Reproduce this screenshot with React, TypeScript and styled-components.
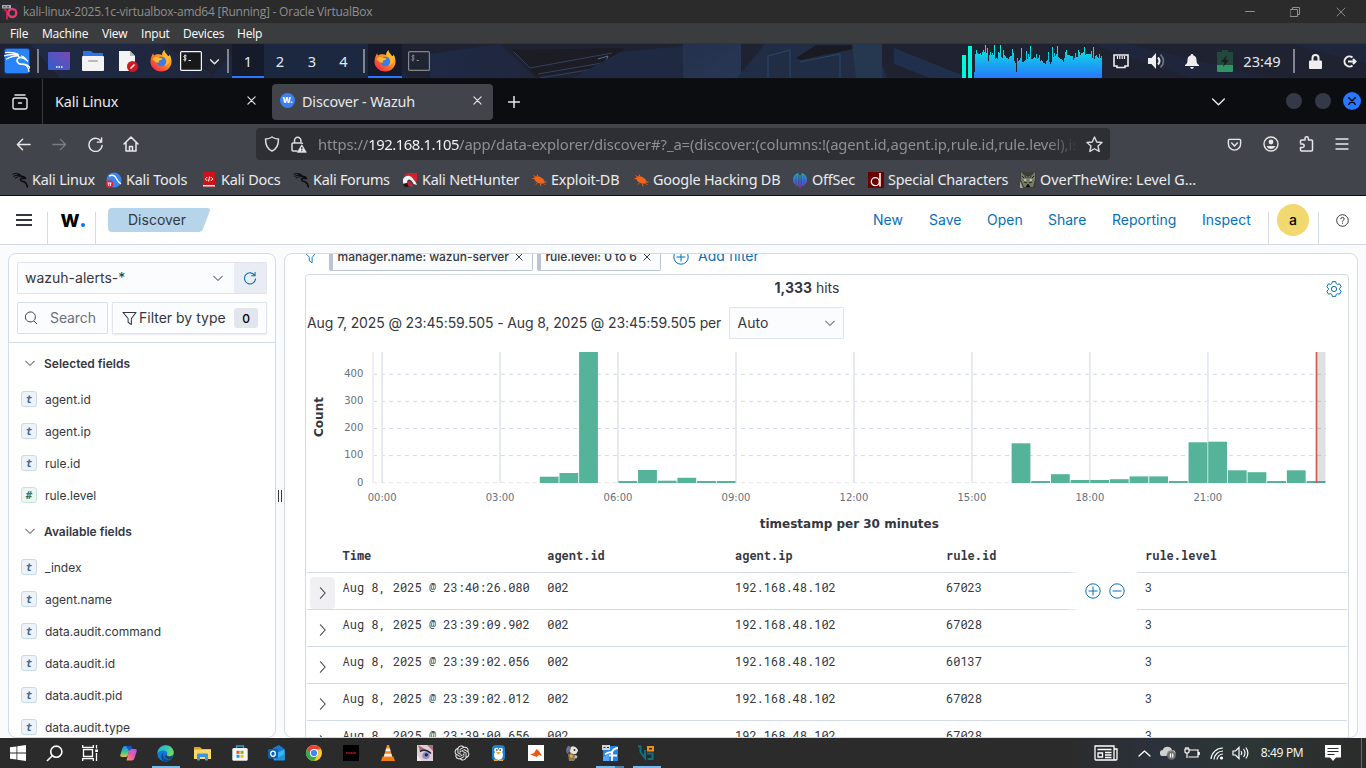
import React from "react";
import styled, { createGlobalStyle, css } from "styled-components";
import { SiKalilinux } from "react-icons/si";
import { RiOpenaiFill } from "react-icons/ri";

const Global = createGlobalStyle`
  *, *::before, *::after { box-sizing: border-box; }
  html, body { margin: 0; padding: 0; }
  body { width: 1366px; height: 768px; overflow: hidden; background: #2b2b2b; }
  svg { display: block; flex: none; }
`;

const shell = `"Open Sans", "Noto Sans", sans-serif`;
const kali = `"Noto Sans", "Open Sans", sans-serif`;
const inter = `Inter, "Noto Sans", sans-serif`;
const mono = `"Roboto Mono", "DejaVu Sans Mono", monospace`;

const Screen = styled.div`
  width: 1366px;
  height: 768px;
  display: flex;
  flex-direction: column;
  overflow: hidden;
`;

const Cell = styled.div<{ $w: number; $ml?: number }>`
  width: ${(p) => p.$w}px;
  margin-left: ${(p) => p.$ml ?? 0}px;
  flex: none;
  display: flex;
  align-items: center;
  justify-content: center;
`;

const Push = styled.div`
  flex: 1;
`;

/* ---------- VirtualBox window frame ---------- */

const TitleBar = styled.header`
  height: 23px;
  flex: none;
  display: flex;
  align-items: center;
  padding-left: 2px;
  background: #2b2b2b;
  font: 400 12px/16px ${shell};
  color: #8f8f8f;
`;
const TitleText = styled.span`
  margin-left: 5px;
  letter-spacing: -0.23px;
  white-space: nowrap;
`;
const MenuBar = styled.nav`
  height: 21px;
  flex: none;
  display: flex;
  align-items: center;
  padding: 1px 0 0 10px;
  background: #3b3c3d;
  border-bottom: 1px solid #333436;
  font: 400 12px/20px ${shell};
  color: #ffffff;
`;
const MenuItem = styled.span<{ $w: number }>`
  width: ${(p) => p.$w}px;
  letter-spacing: -0.2px;
  white-space: nowrap;
`;

/* ---------- Kali panel ---------- */

const Panel = styled.div`
  height: 35px;
  flex: none;
  display: flex;
  align-items: stretch;
  position: relative;
  background: #1d2130;
  border-bottom: 1px solid #0f1116;
  font: 400 14.6px/34px ${kali};
  color: #e6e8ee;
`;
const Wallpaper = styled.svg`
  position: absolute;
  left: 0;
  top: 0;
`;
const PanelRow = styled.div`
  position: relative;
  display: flex;
  flex: 1;
  align-items: stretch;
`;
const Sep = styled.div<{ $ml: number }>`
  width: 2px;
  height: 24px;
  flex: none;
  align-self: center;
  margin-left: ${(p) => p.$ml}px;
  background: #82858d;
`;
const Workspace = styled(Cell)<{ $active?: boolean }>`
  ${(p) =>
    p.$active &&
    css`
      background: #151b2b;
      box-shadow: inset 0 -2px 0 #2777ff;
    `}
`;
const Clock = styled(Cell)`
  font-size: 14.6px;
`;

/* ---------- Firefox ---------- */

const TabBar = styled.div`
  height: 45px;
  flex: none;
  display: flex;
  align-items: center;
  background: #0c0d11;
  font: 400 14.4px/20px ${kali};
  letter-spacing: -0.16px;
  color: #e8e8ea;
`;
const BarDivider = styled.div`
  width: 1px;
  height: 45px;
  background: #3a3b40;
`;
const Tab = styled.div<{ $active?: boolean; $w: number }>`
  width: ${(p) => p.$w}px;
  height: 36px;
  display: flex;
  align-items: center;
  border-radius: 4px;
  padding: 0 ${(p) => (p.$active ? 11 : 11)}px 2px ${(p) => (p.$active ? 8 : 12)}px;
  background: ${(p) => (p.$active ? "#42444c" : "transparent")};
`;
const TabTitle = styled.span`
  flex: 1;
  padding-top: 2px;
  white-space: nowrap;
`;
const Favicon = styled.span`
  width: 15px;
  height: 15px;
  margin-right: 7px;
  border-radius: 50%;
  background: #3b82f0;
  color: #fff;
  font: 800 8px/14px ${inter};
  text-align: center;
`;
const WinButton = styled.span<{ $close?: boolean }>`
  width: ${(p) => (p.$close ? 18 : 16)}px;
  height: ${(p) => (p.$close ? 18 : 16)}px;
  margin-bottom: 1px;
  border-radius: 50%;
  background: ${(p) => (p.$close ? "#2777ff" : "#343947")};
  display: flex;
  align-items: center;
  justify-content: center;
`;
const NavBar = styled.div`
  height: 40px;
  flex: none;
  display: flex;
  align-items: center;
  background: #42444c;
  color: #e8e8ea;
`;
const UrlBar = styled.div`
  width: 854px;
  height: 32px;
  margin-left: 108px;
  flex: none;
  display: flex;
  align-items: center;
  border-radius: 4px;
  background: #2e2f34;
  font: 400 14.8px/22px ${kali};
  color: #8e8f93;
`;
const Url = styled.span`
  width: 760px;
  margin-left: 8px;
  overflow: hidden;
  white-space: nowrap;
  letter-spacing: -0.09px;
  mask-image: linear-gradient(90deg, #000 96%, transparent 100%);
`;
const Host = styled.b`
  font-weight: 400;
  letter-spacing: -0.45px;
  color: #f2f2f3;
`;
const Bookmarks = styled.div`
  height: 32px;
  flex: none;
  display: flex;
  align-items: center;
  background: #42444c;
  border-bottom: 1px solid #0c0d11;
  padding-left: 12px;
  font: 400 14.4px/20px ${kali};
  letter-spacing: -0.2px;
  color: #ececee;
`;
const Bookmark = styled.a<{ $w: number; $ls?: number }>`
  width: ${(p) => p.$w}px;
  flex: none;
  display: flex;
  align-items: center;
  gap: 4px;
  white-space: nowrap;
  ${(p) => p.$ls !== undefined && `letter-spacing: ${p.$ls}px;`}
`;

/* ---------- Wazuh ---------- */

const blue = "#0870b7";

const WzHeader = styled.header`
  height: 49px;
  flex: none;
  display: flex;
  align-items: flex-start;
  background: #fff;
  border-bottom: 1px solid #d3dae6;
  font: 400 14px/48px ${inter};
  color: ${blue};
`;
const WzDivider = styled.div`
  width: 1px;
  height: 32px;
  margin-top: 16px;
  background: #d3dae6;
`;
const HeaderCell = styled(Cell)`
  height: 48px;
`;
const Logo = styled.span`
  display: flex;
  align-items: baseline;
  padding: 1px 0 0 2px;
  color: #000;
  font: 800 18px/24px ${inter};
`;
const LogoDot = styled.i`
  width: 4px;
  height: 4px;
  margin-left: 1px;
  border-radius: 50%;
  background: #0078ff;
`;
const Crumb = styled.div`
  width: 102px;
  height: 24px;
  margin: 12px 0 0 12px;
  padding-left: 20px;
  position: relative;
  font: 400 14px/24px ${inter};
  color: #343741;
`;
const CrumbShape = styled.svg`
  position: absolute;
  left: 0;
  top: 0;
`;
const CrumbText = styled.span`
  position: relative;
`;
const WzLink = styled.a<{ $w: number }>`
  width: ${(p) => p.$w}px;
  flex: none;
  white-space: nowrap;
`;
const Avatar = styled.span`
  width: 32px;
  height: 32px;
  margin-right: 1px;
  border-radius: 50%;
  background: #f1d86f;
  color: #000;
  font: 500 14px/32px ${inter};
  text-align: center;
`;
const WzBody = styled.main`
  height: 493px;
  flex: none;
  display: flex;
  padding: 8px 8px 0;
  background: #fafbfd;
  font-family: ${inter};
  color: #343741;
`;
const Side = styled.aside`
  width: 268px;
  height: 485px;
  flex: none;
  overflow: hidden;
  background: #fff;
  border: 1px solid #d3dae6;
  border-radius: 8px;
`;
const Resizer = styled.div`
  width: 8px;
  flex: none;
  display: flex;
  align-items: center;
  justify-content: center;
  gap: 2px;
`;
const ResizerBar = styled.i`
  width: 1px;
  height: 12px;
  background: #343741;
`;
const SideTop = styled.div`
  height: 89px;
  padding: 8px;
  border-bottom: 1px solid #d3dae6;
`;
/* label nudged up so that it sits on the optical centre of its control */
const Raised = styled.span`
  padding-bottom: 2px;
  white-space: nowrap;
`;
/* label nudged down to line up with the mark beside it */
const Lowered = styled.span`
  padding-top: 2px;
`;
const PatternBox = styled.div`
  height: 32px;
  display: flex;
  align-items: center;
  border: 1px solid #e0e4ef;
  border-radius: 1px;
  background: #fbfcfd;
  font-size: 14px;
`;
const PatternName = styled(Raised)`
  flex: 1;
  padding-left: 7px;
`;
const RefreshBox = styled.span`
  width: 32px;
  height: 30px;
  margin-left: 11px;
  display: flex;
  align-items: center;
  justify-content: center;
  background: #e9edf3;
`;
const FilterRow = styled.div`
  display: flex;
  gap: 4px;
  margin-top: 8px;
`;
const SearchBox = styled.div`
  width: 91px;
  height: 32px;
  display: flex;
  align-items: center;
  padding-left: 6px;
  gap: 12px;
  border: 1px solid #d8deea;
  border-radius: 1px;
  background: #fbfcfd;
  font-size: 14px;
  letter-spacing: -0.1px;
  color: #69707d;
`;
const TypeButton = styled.div`
  width: 155px;
  height: 32px;
  display: flex;
  align-items: center;
  padding-left: 9px;
  border: 1px solid #e0e4ef;
  border-radius: 1px;
  background: #fbfcfd;
  box-shadow: 0 1px 2px rgba(100, 110, 140, 0.15);
  font-size: 14px;
`;
const TypeLabel = styled(Raised)`
  width: 95px;
  margin-left: 2px;
`;
const CountBadge = styled.span`
  width: 24px;
  height: 20px;
  border-radius: 3px;
  background: #e0e5ee;
  color: #000;
  font: 500 12px/21px ${inter};
  text-align: center;
`;
const GroupHead = styled.div`
  height: 40px;
  display: flex;
  align-items: center;
  padding-left: 16px;
  gap: 9px;
  font: 600 12px/16px ${inter};
`;
const Field = styled.div`
  height: 32px;
  display: flex;
  align-items: center;
  padding-left: 12px;
  gap: 8px;
  font-size: 12px;
  line-height: 16px;
`;
const TypeMark = styled.span<{ $num?: boolean }>`
  width: 16px;
  height: 16px;
  border-radius: 3px;
  border: 1px solid ${(p) => (p.$num ? "#c6e5dc" : "#c8d9e9")};
  background: ${(p) => (p.$num ? "#ecf7f3" : "#edf3f8")};
  color: ${(p) => (p.$num ? "#387765" : "#41688e")};
  font: italic 700 10.5px/14px "DejaVu Sans Mono", monospace;
  text-align: center;
`;

const Content = styled.section`
  width: 1074px;
  height: 485px;
  flex: none;
  overflow: hidden;
  background: #fff;
  border: 1px solid #d3dae6;
  border-radius: 8px;
  padding: 0 8px 0 20px;
  display: flow-root;
`;
const FilterBar = styled.div`
  height: 28px;
  margin-top: -11px;
  display: flex;
  align-items: center;
  color: ${blue};
  font-size: 14px;
`;
const Pill = styled.span<{ $w: number; $ml: number }>`
  width: ${(p) => p.$w}px;
  height: 28px;
  margin-left: ${(p) => p.$ml}px;
  flex: none;
  display: flex;
  align-items: center;
  justify-content: space-between;
  padding: 0 9px 0 4.5px;
  border: 1px solid #bcc3d1;
  border-left-width: 4px;
  border-radius: 2px;
  background: #fbfcfd;
  color: #343741;
  font: 500 12px/26px ${inter};
  letter-spacing: -0.03px;
  white-space: nowrap;
`;
const AddFilter = styled(Raised)`
  margin-left: 9px;
  padding-bottom: 3px;
`;
const Results = styled.div`
  width: 1044px;
  height: 480px;
  margin-top: 3px;
  border: 1px solid #d3dae6;
  border-radius: 4px;
`;
const HitsRow = styled.div`
  height: 27px;
  display: flex;
  align-items: center;
  padding: 0 6px 0 468.5px;
  justify-content: space-between;
  font-size: 14px;
`;
const HitsText = styled.span`
  padding-bottom: 3px;
`;
const RangeRow = styled.div`
  height: 32px;
  margin-top: 5px;
  display: flex;
  align-items: center;
  padding-left: 1px;
  font-size: 14px;
`;
const RangeText = styled(Raised)`
  width: 422px;
  letter-spacing: -0.13px;
`;
const Select = styled.span`
  width: 115px;
  height: 32px;
  display: flex;
  align-items: center;
  justify-content: space-between;
  padding: 0 8px 0 7.5px;
  border: 1px solid #e0e4ef;
  border-radius: 1px;
  background: #fbfcfd;
`;
const TableRow = styled.div<{ $head?: boolean }>`
  height: ${(p) => (p.$head ? 33 : 37)}px;
  margin: 0 1px;
  display: grid;
  grid-template-columns: 35.5px 204.700px 187.800px 211px 199px 1fr;
  position: relative;
  padding-top: ${(p) => (p.$head ? 6 : 5)}px;
  border-bottom: 1px solid #d3dae6;
  font: ${(p) => (p.$head ? 700 : 400)} 12px/18px ${mono};
`;
const Toggle = styled.span<{ $hover?: boolean }>`
  width: 25px;
  height: 32px;
  margin: -1px 0 0 3px;
  display: flex;
  align-items: center;
  justify-content: center;
  border-radius: 4px;
  background: ${(p) => (p.$hover ? "#f0f0f2" : "transparent")};
`;
const CellActions = styled.span`
  position: absolute;
  left: 760px;
  top: -2px;
  width: 70px;
  height: 40px;
  display: flex;
  align-items: center;
  gap: 8px;
  padding: 0 0 1px 17.5px;
  background: linear-gradient(90deg, rgba(255, 255, 255, 0), #fff 12px);
`;

/* ---------- Windows taskbar ---------- */

const Taskbar = styled.footer`
  height: 30px;
  flex: none;
  display: flex;
  align-items: stretch;
  background: linear-gradient(90deg, #2b2b2b 0 78%, #2b313b 84%, #2c3634 92%, #2b2b2b);
  font: 400 12px/30px ${shell};
  color: #fff;
`;
const Task = styled(Cell)<{ $open?: boolean; $stack?: boolean }>`
  position: relative;
  ${(p) =>
    p.$open &&
    css`
      &::after {
        content: "";
        position: absolute;
        left: 5px;
        bottom: 0;
        width: 28px;
        height: 2px;
        background: ${p.$stack
          ? "linear-gradient(90deg, #76b9ed 0 19px, #4f7fa6 19px)"
          : "#76b9ed"};
      }
    `}
`;
const DeskEdge = styled.i`
  width: 1px;
  margin: 0 4px 0 13px;
  background: #6a6d6d;
`;
const TaskClock = styled(Cell)`
  letter-spacing: -0.35px;
  white-space: nowrap;
`;

/* ---------- icons ---------- */

type LineProps = { d: string; s?: number; w?: number; c?: string; vb?: string };
const Line = ({ d, s = 16, w = 1.2, c = "currentColor", vb = "0 0 16 16" }: LineProps) => (
  <svg width={s} height={s} viewBox={vb} fill="none" stroke={c} strokeWidth={w} strokeLinecap="round" strokeLinejoin="round">
    <path d={d} />
  </svg>
);

const Cross = ({ s = 10, w = 1.2, c = "currentColor" }: { s?: number; w?: number; c?: string }) => (
  <Line d="M1 1l8 8M9 1l-8 8" s={s} w={w} c={c} vb="0 0 10 10" />
);
const Down = ({ s = 10, w = 1, c = "#343741" }: { s?: number; w?: number; c?: string }) => (
  <Line d="M.5 3l4.500 4.500L9.500 3" s={s} w={w} c={c} vb="0 0 10 10" />
);

const VBoxIcon = () => (
  <svg width="16" height="16" viewBox="0 0 16 16">
    <rect width="16" height="16" fill="#25303c" />
    <path d="M5 15.500V8q-.5-2-3-2.500" stroke="#d3204f" strokeWidth="2" fill="none" />
    <circle cx="10.300" cy="9" r="4" stroke="#e83a68" strokeWidth="2.400" fill="none" />
    <path d="M0 1h9v3.500H0z" fill="#a9abad" />
    <path d="M1.500 2.800h2M5 2.800h2" stroke="#333" />
  </svg>
);

const Firefox = () => (
  <svg width="22" height="22" viewBox="0 0 22 22">
    <defs>
      <linearGradient id="ffx" x1="1" y1="0" x2="0.2" y2="1">
        <stop offset="0" stopColor="#ffe14a" />
        <stop offset=".45" stopColor="#ff9522" />
        <stop offset="1" stopColor="#f0264f" />
      </linearGradient>
    </defs>
    <path d="M12 5C12 3 13 1 14.500 0c0 2.500 2 3.500 3.500 6 1.200-.2 1.500-.6 1.500-1.600 1.400 2 2 4.600 2 7.100 0 6-4.500 10-10.500 10S.5 17 .5 11.500C.5 8 2 5 3.200 3.200c0 1 .3 1.800.9 2.300C5.500 4.400 9 3.600 12 5z" fill="url(#ffx)" />
    <circle cx="11.300" cy="11.500" r="4.800" fill="#3c7bea" />
    <path d="M2.500 9c2-2.500 5-2.400 7-1.200l3 .6c-.3 1.400-2 1.700-3.200 2.200-.7.900-.6 1.500-.2 2.200-3-.2-4.600-1-6.600-3.800z" fill="#ffb92a" />
    <path d="M13 6c2.200.8 3.700 2.600 3.700 5 0 2-.7 3.400-2 4.500 3-.6 5-3 4.800-6C19 7 17 5 14 4z" fill="#ffc42e" opacity=".8" />
  </svg>
);

const Terminal = ({ dim }: { dim?: boolean }) => (
  <svg width="22" height="20" viewBox="0 0 22 20">
    <rect x=".6" y=".6" width="20.800" height="18.800" rx="1" fill={dim ? "#1f2431" : "#17181a"} stroke={dim ? "#84868d" : "#f4f4f4"} strokeWidth="1.200" />
    <path d="M5 3.500v7M6.700 5c-2.500-1-3.500.4-2.400 1.300l1.400.8c1.200 1-.2 2.400-2.300 1.500M8.500 9.500H11" stroke={dim ? "#84868d" : "#f4f4f4"} fill="none" />
  </svg>
);

const Dragon = ({ s = 16, c = "#0b0c0e" }: { s?: number; c?: string }) => (
  <svg width={s} height={s} viewBox="0 0 16 16" fill="none" stroke={c} strokeLinecap="round" strokeLinejoin="round">
    <path d="M.8 2.200c2-.9 4.700-1 7 .2M1.500 4.300C3.500 3.300 6 3 8 3.700M3 6.300c1.500-1.200 3.300-1.800 5-1.700" strokeWidth="1" />
    <path d="M6 2.500c1.500 0 2.800.8 3.300 2 1.500-.2 3.300.3 4.200 2L11 6.300c-2-.2-2.700.8-2.300 1.900.5 1.300 2.300 1.100 3.800 1.800 1.500.8 2.500 2.500 3 5" strokeWidth="1.700" />
  </svg>
);

const EdgeIcon = () => (
  <svg width="17" height="17" viewBox="0 0 17 17">
    <defs>
      <linearGradient id="edgeA" x1="0" y1="0" x2="1" y2=".4">
        <stop offset="0" stopColor="#2aa5e0" />
        <stop offset=".6" stopColor="#38c7b4" />
        <stop offset="1" stopColor="#6cdf5c" />
      </linearGradient>
    </defs>
    <circle cx="8.500" cy="8.500" r="8.200" fill="#1279d4" />
    <path d="M.3 8.500C.6 4 4 .3 8.500.3c5 0 8.200 3.500 8.200 7 0 2.500-1.900 4-4.200 4-1.900 0-3-.7-2.500-1.500 1.200-1.700-.5-4.200-3.300-4.200-3 0-5.400 1-6.400 2.900z" fill="url(#edgeA)" />
    <path d="M6.700 8c-2 3 .5 7 4.500 6.600 1.800-.2 3-.9 4.300-2.200-1.400 3-5 4.700-8 4.200C4 16 2.500 9 6.700 8z" fill="#0b4a93" />
    <path d="M10 9.800c-.8 1.500 3 2.600 5.800.5l-.6 2.400c-3 2.200-7.500 1.300-7.700-2z" fill="#2b2b2b" opacity=".7" />
  </svg>
);

const Chrome = () => (
  <svg width="16" height="16" viewBox="0 0 16 16">
    <circle cx="8" cy="8" r="8" fill="#fcc934" />
    <path d="M8 8L1.070 4A8 8 0 0 0 8 16l3.500-6z" fill="#34a853" />
    <path d="M8 4.300h6.930A8 8 0 0 0 1.070 4L4.500 8z" fill="#ea4335" />
    <circle cx="8" cy="8" r="4" fill="#fff" />
    <circle cx="8" cy="8" r="3.100" fill="#4285f4" />
  </svg>
);

const Bug = () => (
  <svg width="15" height="16" viewBox="0 0 15 16">
    <path d="M1.500 3.500l2 1.500M.5 6.500h2.500M5 2.500l1 2M13.500 13l-1.500-1.500M14.500 10H12M9 14l-.5-2M4 12.500l1-1.300" stroke="#f26419" strokeWidth="1" />
    <ellipse cx="7.300" cy="8" rx="5.500" ry="3.200" transform="rotate(28 7.300 8)" fill="#f26419" />
  </svg>
);

const loads = Array.from({ length: 128 }, (_, i) => {
  const noise = Math.abs(Math.sin(i * 12.9898) * 43758.5453) % 1;
  const step = Math.abs(Math.sin(Math.floor(i / 3) * 7.13) * 9137.31) % 1;
  const spike = i % 9 === 2 || i % 13 === 0 ? 9 : 0;
  const base = i < 14 ? 19 : i > 35 && i < 46 ? 11 : i > 64 && i < 78 ? 9 : 15;
  if (i === 0 || i === 42) return 6;
  return Math.min(33, Math.round(base + noise * 5 + step * 7 + spike));
});

const CpuGraph = () => (
  <svg width="140" height="34" viewBox="0 0 140 34">
    <defs>
      <linearGradient id="cpu" gradientUnits="userSpaceOnUse" x1="0" y1="0" x2="0" y2="34">
        <stop offset="0" stopColor="#00ffd5" />
        <stop offset=".5" stopColor="#18b2ee" />
        <stop offset="1" stopColor="#2777ff" />
      </linearGradient>
    </defs>
    <rect x="0" y="11" width="4" height="23" fill="#00f8da" />
    <rect x="6" y="2" width="4" height="32" fill="#00f8da" />
    {loads.map((h, i) => (
      <rect key={i} x={12 + i} y={34 - h} width="1" height={h} fill="url(#cpu)" shapeRendering="crispEdges" />
    ))}
  </svg>
);

const Funnel = ({ s = 14, c = "#343741" }: { s?: number; c?: string }) => (
  <Line d="M1 1.500h14L10 8v6.500L6.500 12V8z" s={s} w={1.100} c={c} />
);

const RoundSign = ({ plus }: { plus?: boolean }) => (
  <svg width="16" height="16" viewBox="0 0 16 16" fill="none" stroke={blue}>
    <circle cx="8" cy="8" r="7.200" />
    <path d={plus ? "M3.500 8h9M8 3.500v9" : "M3.500 8h9"} />
  </svg>
);

const Gear = () => (
  <svg width="16" height="16" viewBox="0 0 16 16" fill="none" stroke={blue} strokeLinejoin="round">
    <path d="M6.300.6h3.400l.5 2 1.300.8 2-.6 1.700 3-1.500 1.400v1.600l1.500 1.400-1.700 3-2-.6-1.300.8-.5 2H6.300l-.5-2-1.300-.8-2 .6-1.700-3 1.500-1.400V7.200L.8 5.800l1.700-3 2 .6 1.300-.8z" />
    <circle cx="8" cy="8" r="2.600" />
  </svg>
);

/* ---------- data ---------- */

const selected: [string, boolean][] = [
  ["agent.id", false],
  ["agent.ip", false],
  ["rule.id", false],
  ["rule.level", true],
];
const available = ["_index", "agent.name", "data.audit.command", "data.audit.id", "data.audit.pid", "data.audit.type"];

const events = [
  ["Aug 8, 2025 @ 23:40:26.080", "67023"],
  ["Aug 8, 2025 @ 23:39:09.902", "67028"],
  ["Aug 8, 2025 @ 23:39:02.056", "60137"],
  ["Aug 8, 2025 @ 23:39:02.012", "67028"],
  ["Aug 8, 2025 @ 23:39:00.656", "67028"],
];

/* slot = half-hour index since midnight, second value = top edge in the plot */
const bars: [number, number][] = [
  [8, 476.7], [9, 473], [10, 352], [12, 481], [13, 470], [14, 480.7], [15, 477.8], [16, 481], [17, 481],
  [32, 443.3], [33, 481], [34, 474.2], [35, 480], [36, 480], [37, 479.2], [38, 476.4], [39, 476.4], [40, 481],
  [41, 442.3], [42, 441.7], [43, 470.3], [44, 472.2], [45, 481], [46, 470.3], [47, 481],
];
const slotX = (i: number) => 382.1 + i * 19.66;

const Histogram = () => (
  <svg width="1042" height="201" viewBox="306 339 1042 201" fontFamily='"DejaVu Sans", sans-serif'>
    {[0, 100, 200, 300, 400].map((v, i) => (
      <g key={v}>
        <line x1="373" x2="1326" y1={482.7 - i * 27.1} y2={482.7 - i * 27.1} stroke={i ? "#d3dae6" : "#e4e6ea"} strokeDasharray="4 4" />
        <text x="363.300" y={(i ? 485.3 : 486) - i * 27.1} fontSize="10" fill="#69707d" textAnchor="end">{v}</text>
      </g>
    ))}
    <line x1="373" x2="373" y1="352" y2="483" stroke="#eeeff3" strokeWidth="2" />
    {["00", "03", "06", "09", "12", "15", "18", "21"].map((h, i) => (
      <g key={h}>
        <line x1={slotX(i * 6)} x2={slotX(i * 6)} y1="352" y2="483" stroke="#e4e8f0" strokeWidth="1.800" />
        <text x={slotX(i * 6)} y="501" fontSize="10" fill="#69707d" textAnchor="middle">{h}:00</text>
      </g>
    ))}
    {bars.map(([i, top]) => (
      <rect key={i} x={slotX(i) + 0.400} y={top} width="18.800" height={483 - top} fill="#54b399" />
    ))}
    <rect x="1317" y="352" width="8.500" height="131" fill="#69707d" opacity=".22" />
    <line x1="1316.500" x2="1316.500" y1="352" y2="483" stroke="#cd5c59" strokeWidth="1.700" />
    <text x="849.300" y="528" fontSize="12" fontWeight="700" fill="#343741" textAnchor="middle">timestamp per 30 minutes</text>
    <text transform="translate(323 417) rotate(-90)" fontSize="12" fontWeight="700" fill="#343741" textAnchor="middle">Count</text>
  </svg>
);

const TaskIcons = () => (
  <>
    <Task $w={36}>
      <svg width="16" height="16" viewBox="0 0 16 16" fill="#fff">
        <path d="M0 2.300l6.500-.9v6.200H0zM7.300 1.300L16 0v7.600H7.300zM0 8.400h6.500v6.200L0 13.700zM7.300 8.400H16V16l-8.700-1.300z" />
      </svg>
    </Task>
    <Task $w={36}>
      <svg width="17" height="17" viewBox="0 0 17 17" fill="none" stroke="#fff" strokeWidth="1.600">
        <circle cx="10.300" cy="6.700" r="5.600" /><path d="M6.300 10.700L1 16" />
      </svg>
    </Task>
    <Task $w={36}>
      <svg width="17" height="16" viewBox="0 0 17 16" fill="none" stroke="#fff" strokeWidth="1.300">
        <path d="M1.500 4.500h9v7h-9zM.7 0v2.300h10.600V0M.7 16v-2.300h10.600V16M14.500 0v3.500M14.500 8v8" />
        <path d="M13.200 4.500h2.800V7h-2.800z" fill="#fff" stroke="none" />
      </svg>
    </Task>
    <Task $w={37} $ml={2}>
      <svg width="17" height="16" viewBox="0 0 17 16">
        <defs>
          <linearGradient id="copA" x1="0" y1="0" x2="0" y2="1"><stop offset="0" stopColor="#1c8ff0" /><stop offset=".6" stopColor="#3fc98c" /><stop offset="1" stopColor="#f2c53c" /></linearGradient>
          <linearGradient id="copB" x1="1" y1="0" x2="0" y2="1"><stop offset="0" stopColor="#a25af0" /><stop offset=".6" stopColor="#f0609c" /><stop offset="1" stopColor="#f7a050" /></linearGradient>
        </defs>
        <path d="M5 1h5.500L8 10q-.5 2-2.500 2H2Q-.3 12 .4 9.500L2.500 3Q3.200 1 5 1z" fill="url(#copA)" />
        <path d="M12 15.500H6.500L9 6q.5-2 2.500-2H15q2.300 0 1.600 2.500L14.500 13q-.7 2.500-2.500 2.500z" fill="url(#copB)" />
        <path d="M6 1h4.500q1.500 0 2 3h-1q-2 0-2.500 2z" fill="#1b50c8" />
      </svg>
    </Task>
    <Task $w={37} $open><EdgeIcon /></Task>
    <Task $w={37}>
      <svg width="17" height="15" viewBox="0 0 17 15">
        <path d="M0 1h6l2 2h9v3H0z" fill="#e3a21a" />
        <path d="M0 3.500h17V13H0z" fill="#ffd968" />
        <path d="M3 14.500V8.500q0-1 1-1h9q1 0 1 1v6h-3V11H6v3.500z" fill="#3a98e0" />
      </svg>
    </Task>
    <Task $w={37}>
      <svg width="16" height="16" viewBox="0 0 16 16">
        <path d="M4.500 4V1h7v3" fill="none" stroke="#2aa3e8" strokeWidth="1.300" />
        <rect x=".3" y="3" width="15.400" height="12.800" rx="1.500" fill="#f5f5f5" />
        <path d="M4.500 5.800h3v3h-3z" fill="#f25022" /><path d="M8.500 5.800h3v3h-3z" fill="#7fba00" />
        <path d="M4.500 9.800h3v3h-3z" fill="#00a4ef" /><path d="M8.500 9.800h3v3h-3z" fill="#ffb900" />
      </svg>
    </Task>
    <Task $w={37}>
      <svg width="17" height="16" viewBox="0 0 17 16">
        <path d="M5 3l6-3 5.500 4v10.500H5z" fill="#1a78cf" />
        <path d="M6 9l10.500-4.500V15H6z" fill="#35b8f1" />
        <path d="M6 15l10.500-6v6.500H6z" fill="#1d93e0" />
        <rect x="0" y="4" width="10" height="9.500" rx="1" fill="#0f5fb3" />
        <ellipse cx="5" cy="8.700" rx="2.300" ry="2.600" fill="none" stroke="#fff" strokeWidth="1.300" />
      </svg>
    </Task>
    <Task $w={37}><Chrome /></Task>
    <Task $w={37}>
      <svg width="16" height="16" viewBox="0 0 16 16"><path d="M0 0h16v16H0z" /><path d="M3 8h10" stroke="#9c1119" strokeWidth="1.800" strokeDasharray="1.200 .4" /></svg>
    </Task>
    <Task $w={37}>
      <svg width="14" height="16" viewBox="0 0 14 16">
        <path d="M1.500 11.500h11L14 16H0z" fill="#f07c12" />
        <path d="M6 0h2l3.500 12.500h-9z" fill="#f58a1f" />
        <path d="M5.200 3.500h3.600l.8 2.700H4.400zM3.700 8.800h6.600l.8 2.700H2.900z" fill="#eee" />
      </svg>
    </Task>
    <Task $w={37}>
      <svg width="16" height="16" viewBox="0 0 16 16">
        <path d="M0 0h16v16H0z" fill="#e2cdd2" />
        <path d="M1 0l7 4-5 2zM10 0h6v6z" fill="#a5727c" />
        <path d="M3 6.500q5-3.500 11 2" stroke="#2c2238" strokeWidth="1.600" fill="none" />
        <ellipse cx="9" cy="10.500" rx="3.700" ry="3.600" fill="#8a8fc4" />
        <circle cx="9.300" cy="9.800" r="1.600" fill="#1f1c40" />
        <path d="M0 10l5 6H0z" fill="#f6e9ea" />
      </svg>
    </Task>
    <Task $w={37}><RiOpenaiFill size={18} color="#efefef" /></Task>
    <Task $w={37}>
      <svg width="13" height="16" viewBox="0 0 13 16">
        <rect width="13" height="16" rx="4" fill="#1f7fd0" />
        <ellipse cx="6.500" cy="10" rx="4.500" ry="5" fill="#fff" />
        <circle cx="4.300" cy="5" r="2.200" fill="#fff" /><circle cx="8.700" cy="5" r="2.200" fill="#fff" />
        <circle cx="4.800" cy="5" r=".8" /><circle cx="8.200" cy="5" r=".8" />
        <path d="M4 7h5l-2.500 2.500zM2 14.500h4V16H2zM7 14.500h4V16H7z" fill="#f6a81c" />
      </svg>
    </Task>
    <Task $w={37}>
      <svg width="16" height="16" viewBox="0 0 16 16">
        <path d="M0 0h16v16H0z" fill="#fff" />
        <path d="M2 9.500L6 8l2.500-4L11 6l3 5-3-1-2.500 2L5 10.500z" fill="#f2571a" />
      </svg>
    </Task>
    <Task $w={37}>
      <svg width="15" height="16" viewBox="0 0 15 16">
        <path d="M4 4q2-3.500 5-2.500Q13 3 13 6l-2 3H6z" fill="#e9e3d6" />
        <path d="M2 2l2-1.500L6 3 4.500 7 2 9 1 5z" fill="#6a6f92" />
        <path d="M3 9q4-2 7 1l1 3-2 3H4z" fill="#8d7a5e" />
        <path d="M5 9.500l3 1-1 2.500-2-1z" fill="#e9b13a" />
        <path d="M10 10l2.500 1-1 2.500-2-.5z" fill="#cfc6b0" />
        <circle cx="9.500" cy="5" r=".9" fill="#222" />
      </svg>
    </Task>
    <Task $w={37} $open $stack>
      <svg width="16" height="16" viewBox="0 0 16 16">
        <path d="M1 1h15v15H1z" fill="#2383ec" />
        <path d="M1 12l6-3v7H1z" fill="#52a5fa" />
        <path d="M10 16V8q0-4 6-5M7 10.500h8M3 9.500q3-3 7-2" stroke="#fff" strokeWidth="1.800" fill="none" />
        <path d="M0 0h8v5H0z" fill="#d3d6da" />
        <path d="M1.500 2.500h2M5 2.500h2" stroke="#333" strokeWidth="1.200" />
      </svg>
    </Task>
    <Task $w={37} $open>
      <svg width="17" height="16" viewBox="0 0 17 16" fill="none" strokeWidth="2">
        <path d="M0 1.500h2.500v5.500l4.500 6V5" stroke="#12707f" />
        <path d="M9 8.500h5.500v5.500H9.500" stroke="#12707f" />
        <path d="M10 5.500V2h5v3.500z" stroke="#f0901e" />
      </svg>
    </Task>
  </>
);

export default function App() {
  return (
    <Screen>
      <Global />
      <TitleBar>
        <VBoxIcon />
        <TitleText>kali-linux-2025.1c-virtualbox-amd64 [Running] - Oracle VirtualBox</TitleText>
        <Push />
        <Cell $w={48}><Line d="M.5 4.500h9" s={10} w={1} vb="0 0 10 10" /></Cell>
        <Cell $w={42}><Line d="M.5 2.500h7v7h-7zM2.500 2V.5h7v7H8" s={10} w={1} vb="0 0 10 10" /></Cell>
        <Cell $w={50}><Cross w={0.9} /></Cell>
      </TitleBar>
      <MenuBar>
        <MenuItem $w={32}>File</MenuItem>
        <MenuItem $w={60}>Machine</MenuItem>
        <MenuItem $w={39}>View</MenuItem>
        <MenuItem $w={42}>Input</MenuItem>
        <MenuItem $w={54}>Devices</MenuItem>
        <MenuItem $w={40}>Help</MenuItem>
      </MenuBar>

      <Panel>
        <Wallpaper width="1366" height="34" viewBox="0 0 1366 34">
          <defs>
            <linearGradient id="w1" x1="0" x2="1"><stop offset="0" stopColor="#1f2a45" /><stop offset="1" stopColor="#20263c" /></linearGradient>
            <linearGradient id="w2" x1="0" y1="0" x2="1" y2="1"><stop offset="0" stopColor="#25304d" /><stop offset="1" stopColor="#273853" /></linearGradient>
          </defs>
          <rect width="1366" height="34" fill="#1e2231" />
          <path d="M30 0h130l60 34H60z" fill="url(#w1)" />
          <path d="M240 0h130l40 34H210z" fill="#1c2740" />
          <path d="M430 10L500 0l36 34H430z" fill="url(#w1)" />
          <path d="M512 5l23 27 75-10 14-18-100 2z" fill="#1b1c24" />
          <path d="M514 8l16 16 82-15M538 30l70-12M540 34l60-10" stroke="#33415c" fill="none" />
          <path d="M598 15l10-3-3 8 6-2" stroke="#5b6f90" fill="none" />
          <path d="M620 8l63-6v32h-110z" fill="#1f2a42" />
          <path d="M683 0h58v34h-58z" fill="url(#w2)" />
          <path d="M737 34L765 0h110l12 34z" fill="#212d45" />
          <path d="M796 14l20-13h56l-28 6-44 9z" fill="#1a1b22" />
          <path d="M768 34V12l22-6v28M800 18l40-8v24" stroke="#2c466a" fill="none" />
          <path d="M852 0h30v34h-26z" fill="#26384f" />
          <path d="M894 4l70 28v2h-34l-36-14z" fill="#20304c" />
          <path d="M1090 0h40l140 34h-80zM1290 0h76v20z" fill="#1f263b" />
        </Wallpaper>
        <PanelRow>
          <Cell $w={34}>
            <svg width="26" height="26" viewBox="0 0 26 26">
              <rect width="26" height="26" rx="3" fill="#1466e8" opacity=".55" />
              <rect x="1" y="1" width="24" height="24" rx="2" fill="#2a83f8" />
              <SiKalilinux x="0" y="1" size={26} color="#fff" stroke="#fff" strokeWidth={0.9} />
            </svg>
          </Cell>
          <Sep $ml={3} />
          <Cell $w={34} $ml={3}>
            <svg width="22" height="18" viewBox="0 0 22 18">
              <defs><linearGradient id="desk" x1="0" y1="1" x2="1" y2="0"><stop offset="0" stopColor="#2f5fd0" /><stop offset="1" stopColor="#7a4ab0" /></linearGradient></defs>
              <rect width="22" height="18" rx="1" fill="url(#desk)" />
              <path d="M8 15h1.500M10.500 15H12M13 15h1.500" stroke="#fff" strokeWidth="1.500" />
            </svg>
          </Cell>
          <Cell $w={34}>
            <svg width="22" height="20" viewBox="0 0 22 20">
              <path d="M1 0h8l2 2h10v6H1z" fill="#2c74e4" />
              <rect y="5" width="22" height="15" rx="1" fill="#f3f3f3" />
              <rect x="6" y="9" width="10" height="2" rx="1" fill="#b9b9b9" />
            </svg>
          </Cell>
          <Cell $w={34}>
            <svg width="21" height="22" viewBox="-1 0 21 22">
              <path d="M1 1h11l5 5v15H1z" fill="#f4f4f4" />
              <path d="M12 1l5 5h-5z" fill="#b8b8b8" />
              <circle cx="14.500" cy="16.500" r="5.500" fill="#cf1820" />
              <path d="M12.500 18.500l4-4" stroke="#fff" strokeWidth="1.600" />
            </svg>
          </Cell>
          <Cell $w={34}><Firefox /></Cell>
          <Cell $w={26}><Terminal /></Cell>
          <Cell $w={20}><Down s={9} w={1.5} c="#eceef2" /></Cell>
          <Sep $ml={3} />
          <Workspace $w={32} $ml={3} $active>1</Workspace>
          <Workspace $w={32}>2</Workspace>
          <Workspace $w={32}>3</Workspace>
          <Workspace $w={31}>4</Workspace>
          <Sep $ml={4} />
          <Workspace $w={34} $ml={3} $active><Firefox /></Workspace>
          <Cell $w={34}><Terminal dim /></Cell>
          <Push />
          <CpuGraph />
          <Cell $w={37}>
            <svg width="16" height="15" viewBox="0 0 16 15" fill="none" stroke="#eee" strokeWidth="1.600">
              <path d="M1 1h14v11h-3v1.500H4V12H1z" />
              <path d="M4.500 2v3M6.800 2v3M9.200 2v3M11.500 2v3" strokeWidth="1.200" />
            </svg>
          </Cell>
          <Cell $w={35}>
            <svg width="18" height="16" viewBox="0 0 18 16">
              <path d="M0 5h3.500L8 0v16l-4.500-5H0z" fill="#eee" />
              <path d="M10 4.500q3 3.500 0 7" stroke="#eee" strokeWidth="2" fill="none" />
              <path d="M12.500 1.500q6 6.500 0 13" stroke="#73767d" strokeWidth="1.600" fill="none" />
            </svg>
          </Cell>
          <Cell $w={35}>
            <svg width="14" height="15" viewBox="0 0 14 15" fill="#eee">
              <path d="M7 0c.8 0 1.200.5 1.200 1.200C10.500 1.800 11.500 3.500 11.500 6c0 3 .8 4 2.500 5v1H0v-1c1.700-1 2.500-2 2.500-5 0-2.500 1-4.200 3.300-4.800C5.800.5 6.200 0 7 0zM5.200 13h3.600c0 1-.8 1.800-1.800 1.800S5.200 14 5.200 13z" />
            </svg>
          </Cell>
          <Cell $w={32}>
            <svg width="16" height="22" viewBox="0 0 16 22">
              <path d="M5 0h6v2h5v14H0V2h5z" fill="#24483d" />
              <path d="M0 15h16v6q0 1-1 1H1q-1 0-1-1z" fill="#2f9563" />
              <path d="M10 5l-6 7h3.500L6 17l6-7H8.500z" fill="#14201f" />
            </svg>
          </Cell>
          <Clock $w={42}>23:49</Clock>
          <Sep $ml={10} />
          <Cell $w={36} $ml={2}>
            <svg width="13" height="15" viewBox="0 0 13 15">
              <path d="M3.500 7V4a3 3 0 0 1 6 0v3" stroke="#eee" strokeWidth="2" fill="none" />
              <rect y="6.500" width="13" height="8.500" rx="1" fill="#eee" />
            </svg>
          </Cell>
          <Cell $w={33}>
            <svg width="14" height="13" viewBox="0 0 14 13" fill="none" stroke="#eee" strokeWidth="2">
              <path d="M9.500 2.500a5 5 0 1 0 0 8M5 6.500h7.500M10 4l2.500 2.500L10 9" />
            </svg>
          </Cell>
        </PanelRow>
      </Panel>

      <TabBar>
        <Cell $w={40}>
          <svg width="16" height="16" viewBox="0 0 16 16" fill="none" stroke="#e8e8ea" strokeWidth="1.400" strokeLinecap="round">
            <path d="M3 1h10M1 6q0-2 2-2h10q2 0 2 2v7q0 2-2 2H3q-2 0-2-2zM6.500 9h3" />
          </svg>
        </Cell>
        <Cell $w={2} />
        <BarDivider />
        <Tab $w={224}><TabTitle>Kali Linux</TabTitle><Cross s={9} w={1.3} /></Tab>
        <Cell $w={5} />
        <Tab $w={221} $active>
          <Favicon>W.</Favicon>
          <TabTitle>Discover - Wazuh</TabTitle>
          <Cross s={9} w={1.3} />
        </Tab>
        <Cell $w={42}><Line d="M6 .5v11M.5 6h11" s={12} w={1.5} vb="0 0 12 12" /></Cell>
        <Push />
        <Cell $w={24}><Down s={13} w={1.1} c="#e8e8ea" /></Cell>
        <Cell $w={29} $ml={49}><WinButton /></Cell>
        <Cell $w={29}><WinButton /></Cell>
        <Cell $w={29}><WinButton $close><Cross s={8} w={2} c="#0c0d11" /></WinButton></Cell>
      </TabBar>

      <NavBar>
        <Cell $w={36} $ml={5}><Line d="M15 8H1.500M7 2.500L1.500 8 7 13.500" s={15} w={1.5} /></Cell>
        <Cell $w={36}><Line d="M1 8h13.500M9 2.500L14.500 8 9 13.500" s={15} w={1.4} c="#7b7c82" /></Cell>
        <Cell $w={36}><Line d="M14.500 1v4.500H10M14.300 5.300A7 7 0 1 0 15 9" s={15} w={1.5} /></Cell>
        <Cell $w={35}><Line d="M1 8l7-7 7 7M3 7v8h10V7M6.500 15v-4.500h3V15" s={16} w={1.5} /></Cell>
        <UrlBar>
          <Cell $w={32}><Line d="M8 1c2 1.500 4.500 2 6.500 2 0 6-1.500 10-6.500 12C3 13 1.500 9 1.500 3 3.500 3 6 2.500 8 1z" w={1.5} c="#dcdce0" /></Cell>
          <Cell $w={22}>
            <svg width="16" height="17" viewBox="0 0 16 17" fill="none" stroke="#dcdce0" strokeWidth="1.500">
              <path d="M3.500 7V4.500a3.200 3.200 0 0 1 6.400 0V7M11.500 8q0-1-1-1H2Q1 7 1 8v6q0 1 1 1h4.500" />
              <path d="M10.800 8.800l4.500 7.500h-9z" fill="#e8e8ea" strokeWidth=".8" />
              <path d="M10.800 11v2.500M10.800 14.300v1" stroke="#2e2f34" strokeWidth="1.200" />
            </svg>
          </Cell>
          <Url>https://<Host>192.168.1.105</Host>/app/data-explorer/discover#?_a=(discover:(columns:!(agent.id,agent.ip,rule.id,rule.level),is</Url>
          <Cell $w={32}><Line d="M8 1l2.100 4.600 5 .5-3.800 3.300L12.400 14.500 8 12l-4.400 2.500 1.100-5.100L.9 6.100l5-.5z" s={17} w={1.3} c="#dcdce0" /></Cell>
        </UrlBar>
        <Cell $w={36} $ml={106}><Line d="M2.500 2.500h11q1 0 1 1V7.500a6.500 6.500 0 0 1-13 0v-4q0-1 1-1zM5 6.500l3 3 3-3" w={1.500} s={15} /></Cell>
        <Cell $w={37}>
          <svg width="16" height="16" viewBox="0 0 16 16" fill="none" stroke="#e8e8ea" strokeWidth="1.400">
            <circle cx="8" cy="8" r="7" /><circle cx="8" cy="6" r="2.400" fill="#e8e8ea" stroke="none" />
            <path d="M3.700 10h8.600q-1 3-4.300 3t-4.300-3z" fill="#e8e8ea" stroke="none" />
          </svg>
        </Cell>
        <Cell $w={36}><Line d="M1.500 6.500V5q0-1 1-1H6V2.500a1.700 1.700 0 0 1 3.400 0V4h3.100q1 0 1 1v9q0 1-1 1H2.500q-1 0-1-1v-2.500h2a1.700 1.700 0 0 0 0-3.400h-2" w={1.5} /></Cell>
        <Cell $w={34}><Line d="M1 2h12M1 7h12M1 12h12" s={14} w={1.3} vb="0 0 14 14" /></Cell>
      </NavBar>

      <Bookmarks>
        <Bookmark $w={94}><Dragon />Kali Linux</Bookmark>
        <Bookmark $w={95}>
          <svg width="16" height="16" viewBox="0 0 16 16">
            <circle cx="8" cy="8" r="7.500" fill="#3a86ee" />
            <path d="M3 4q5-2 7 2t5 6" stroke="#fff" strokeWidth="1.400" fill="none" />
            <circle cx="3.500" cy="12" r="3.800" fill="#d7263d" />
            <path d="M1.500 11h4M2.700 11v3M4.500 11v3" stroke="#fff" strokeWidth=".9" />
          </svg>
          Kali Tools
        </Bookmark>
        <Bookmark $w={92}>
          <svg width="16" height="16" viewBox="0 0 16 16">
            <path d="M2 0h12v13H2z" fill="#cc1418" /><path d="M2 13h12v1.700H2z" fill="#eee" /><path d="M2 14.700h12V16H2z" fill="#cc1418" />
            <path d="M6.300 5l-2 2 2 2M9.800 5l2 2-2 2M8.600 4.500l-1 5" stroke="#fff" fill="none" />
          </svg>
          Kali Docs
        </Bookmark>
        <Bookmark $w={109} $ls={-0.25}><Dragon />Kali Forums</Bookmark>
        <Bookmark $w={130}>
          <svg width="16" height="16" viewBox="0 0 16 16">
            <path d="M2 3l4-2h9v8l-3 2-5-4z" fill="#d81e2c" />
            <path d="M1.500 12Q-.5 6 4 4.200t8 3.800q2 2 3 5l-3.500-1q-1.500-4-4-4.500T5 11z" fill="#f2f2f2" />
            <path d="M5.500 10.500q2-2 4 1.500l2 1-2 2q-2-2-3.500-1.500z" fill="#d81e2c" />
            <path d="M1 12l4-1 1.500 4H3z" fill="#17181c" />
          </svg>
          Kali NetHunter
        </Bookmark>
        <Bookmark $w={102}><Bug />Exploit-DB</Bookmark>
        <Bookmark $w={158}><Bug />Google Hacking DB</Bookmark>
        <Bookmark $w={76}>
          <svg width="16" height="16" viewBox="0 0 16 16">
            <defs><linearGradient id="ofs" x1="0" y1="0" x2="0" y2="1"><stop offset="0" stopColor="#19b3c8" /><stop offset=".5" stopColor="#3b6cd8" /><stop offset="1" stopColor="#7a35d0" /></linearGradient></defs>
            <path d="M6.500 1v13.500Q1 13 1 7.500 1 2.500 6.500 1zM9.500 1v13.500Q15 13 15 7.500 15 2.500 9.500 1zM7.300 3h1.400v13H7.300z" fill="url(#ofs)" />
            <path d="M4 3v10M12 3v10" stroke="#42444c" strokeWidth=".5" />
          </svg>
          OffSec
        </Bookmark>
        <Bookmark $w={152}>
          <svg width="16" height="16" viewBox="0 0 16 16">
            <path d="M0 0h16v16H0z" fill="#6b0000" />
            <circle cx="7.300" cy="9.700" r="4" stroke="#fff" strokeWidth="1.300" fill="none" /><path d="M12 1v13.500" stroke="#fff" strokeWidth="1.500" />
          </svg>
          Special Characters
        </Bookmark>
        <Bookmark $w={180} $ls={0}>
          <svg width="16" height="16" viewBox="0 0 16 16">
            <path d="M0 0h16v16H0z" fill="#3c4034" />
            <path d="M1 0l4 4h6l4-4v7l-2 8H4L1 8z" fill="#757a69" />
            <path d="M5 4l1 2M8 3v3M11 4l-1 2M4 10l3 1M12 10l-3 1M6 15l2-3 2 3M2 4l2 2M14 4l-2 2" stroke="#23261d" />
            <circle cx="5.200" cy="8" r="1.200" fill="#c3c8a6" /><circle cx="10.800" cy="8" r="1.200" fill="#c3c8a6" />
            <path d="M0 9l3 7H0z" fill="#a5a996" />
          </svg>
          OverTheWire: Level G…
        </Bookmark>
      </Bookmarks>

      <WzHeader>
        <HeaderCell $w={48}>
          <svg width="16" height="12" viewBox="0 0 16 12" fill="#343741"><path d="M0 0h16v2H0zM0 5h16v2H0zM0 10h16v2H0z" /></svg>
        </HeaderCell>
        <Cell $w={-1} $ml={-1} />
        <WzDivider />
        <HeaderCell $w={47}><Logo>W<LogoDot /></Logo></HeaderCell>
        <WzDivider />
        <Crumb>
          <CrumbShape width="102" height="24" viewBox="0 0 102 24">
            <path d="M4 0h95q4 0 2.600 3.500L95 21q-1.300 3-4.500 3H4q-4 0-4-4V4q0-4 4-4z" fill="#b7d5ea" />
          </CrumbShape>
          <CrumbText>Discover</CrumbText>
        </Crumb>
        <Push />
        <WzLink $w={56}>New</WzLink>
        <WzLink $w={58}>Save</WzLink>
        <WzLink $w={61}>Open</WzLink>
        <WzLink $w={64}>Share</WzLink>
        <WzLink $w={90}>Reporting</WzLink>
        <WzLink $w={66}>Inspect</WzLink>
        <WzDivider />
        <HeaderCell $w={49}><Avatar>a</Avatar></HeaderCell>
        <WzDivider />
        <HeaderCell $w={47}>
          <svg width="14" height="13" viewBox="0 0 14 13" fill="none" stroke="#343741">
            <circle cx="6.500" cy="6.500" r="5.800" /><path d="M4.800 5.200q0-1.800 1.700-1.800t1.700 1.600c0 1.200-1.700 1.300-1.700 2.700M6.500 8.700v1" />
          </svg>
        </HeaderCell>
      </WzHeader>

      <WzBody>
        <Side>
          <SideTop>
            <PatternBox>
              <PatternName>wazuh-alerts-*</PatternName>
              <Down />
              <RefreshBox><Line d="M13.800 1.500v4h-4M13.500 5.300A6.300 6.300 0 1 0 14.300 9" s={14} w={1.2} c={blue} /></RefreshBox>
            </PatternBox>
            <FilterRow>
              <SearchBox>
                <Line d="M10.800 11.500A5.800 5.800 0 1 1 12 10.300M11.500 11.500L14.500 14.500" s={14} w={1.1} c="#343741" />
                <Raised>Search</Raised>
              </SearchBox>
              <TypeButton>
                <Funnel s={15} />
                <TypeLabel>Filter by type</TypeLabel>
                <CountBadge>0</CountBadge>
              </TypeButton>
            </FilterRow>
          </SideTop>
          <GroupHead><Down /><Lowered>Selected fields</Lowered></GroupHead>
          {selected.map(([name, num]) => (
            <Field key={name}><TypeMark $num={num}>{num ? "#" : "t"}</TypeMark><Lowered>{name}</Lowered></Field>
          ))}
          <GroupHead><Down /><Lowered>Available fields</Lowered></GroupHead>
          {available.map((name) => (
            <Field key={name}><TypeMark>t</TypeMark><Lowered>{name}</Lowered></Field>
          ))}
        </Side>
        <Resizer><ResizerBar /><ResizerBar /></Resizer>
        <Content>
          <FilterBar>
            <Cell $w={10}><Funnel s={13} c={blue} /></Cell>
            <Pill $w={204} $ml={14}>manager.name: wazuh-server<Cross s={8} w={1.2} /></Pill>
            <Pill $w={124} $ml={4}>rule.level: 0 to 6<Cross s={8} w={1.2} /></Pill>
            <Cell $w={16} $ml={12}><RoundSign plus /></Cell>
            <AddFilter>Add filter</AddFilter>
          </FilterBar>
          <Results>
            <HitsRow><HitsText><b>1,333</b> hits</HitsText><Gear /></HitsRow>
            <RangeRow>
              <RangeText>Aug 7, 2025 @ 23:45:59.505 - Aug 8, 2025 @ 23:45:59.505 per</RangeText>
              <Select><Raised>Auto</Raised><Down /></Select>
            </RangeRow>
            <Histogram />
            <TableRow $head>
              <span /><span>Time</span><span>agent.id</span><span>agent.ip</span><span>rule.id</span><span>rule.level</span>
            </TableRow>
            {events.map(([time, rule], i) => (
              <TableRow key={time}>
                <Toggle $hover={i === 0}><Line d="M5 2l5.500 6L5 14" s={14} w={1.2} c="#343741" /></Toggle>
                <span>{time}</span><span>002</span><span>192.168.48.102</span><span>{rule}</span><span>3</span>
                {i === 0 && <CellActions><RoundSign plus /><RoundSign /></CellActions>}
              </TableRow>
            ))}
          </Results>
        </Content>
      </WzBody>

      <Taskbar>
        <TaskIcons />
        <Push />
        <Cell $w={32}>
          <svg width="24" height="16" viewBox="0 0 24 16" fill="none" stroke="#fff" strokeWidth="1.300">
            <path d="M1 1h19v14H2q-1 0-1-1zM20 4h3v10q0 1-1 1h-3M3.500 4.500h14M11 7.500h6.500M11 10h6.500M11 12.500h6.500M4 8h4.500v4H4z" />
          </svg>
        </Cell>
        <Cell $w={24} $ml={10}><Line d="M1 9l5.500-5L12 9" s={13} w={1.3} vb="0 0 13 13" /></Cell>
        <Cell $w={24}>
          <svg width="16" height="14" viewBox="0 0 16 14">
            <path d="M3 10a3 3 0 0 1-.3-6A5 5 0 0 1 12 4a3 3 0 0 1 1 6z" fill="#cfcfcf" />
            <path d="M8 5l5-1 2 3-4 3H6z" fill="#8e8e8e" />
            <circle cx="11.500" cy="9.500" r="4.300" fill="#6f6f6f" /><path d="M10.500 7.500v4M12.700 7.500v4" stroke="#fff" strokeWidth="1.200" />
          </svg>
        </Cell>
        <Cell $w={24}>
          <svg width="16" height="14" viewBox="0 0 16 14" fill="none" stroke="#fff" strokeWidth="1.200">
            <path d="M5.500 4H14v7H4.500M15.200 6v3M1 3h4v3q0 1-2 1t-2-1zM2 1v2M4 1v2M3 7v5" />
          </svg>
        </Cell>
        <Cell $w={25}>
          <svg width="14" height="14" viewBox="0 0 14 14" fill="none" stroke="#fff" strokeWidth="1.200">
            <path d="M1 13A12 12 0 0 1 13 2M4 13.500A9 9 0 0 1 13 5M7 13.500A6 6 0 0 1 13 8" /><circle cx="11.500" cy="12" r="1" fill="#fff" />
          </svg>
        </Cell>
        <Cell $w={23}>
          <svg width="17" height="14" viewBox="0 0 17 14" fill="none" stroke="#fff" strokeWidth="1.200">
            <path d="M1 5h2.500L7 1.500v11L3.500 9H1zM9 5q1.500 2 0 4M11.500 3q3 4 0 8M13.800 1.500q4.200 5.500 0 11" />
          </svg>
        </Cell>
        <TaskClock $w={44} $ml={8}>8:49 PM</TaskClock>
        <Cell $w={30} $ml={14}>
          <svg width="16" height="16" viewBox="0 0 16 16"><path d="M0 0h16v12.500h-5L8 16l-3-3.500H0z" fill="#fff" /><path d="M2.500 3.500h11M2.500 6.500h11M2.500 9.500h7" stroke="#2b2b2b" /></svg>
        </Cell>
        <DeskEdge />
      </Taskbar>
    </Screen>
  );
}
